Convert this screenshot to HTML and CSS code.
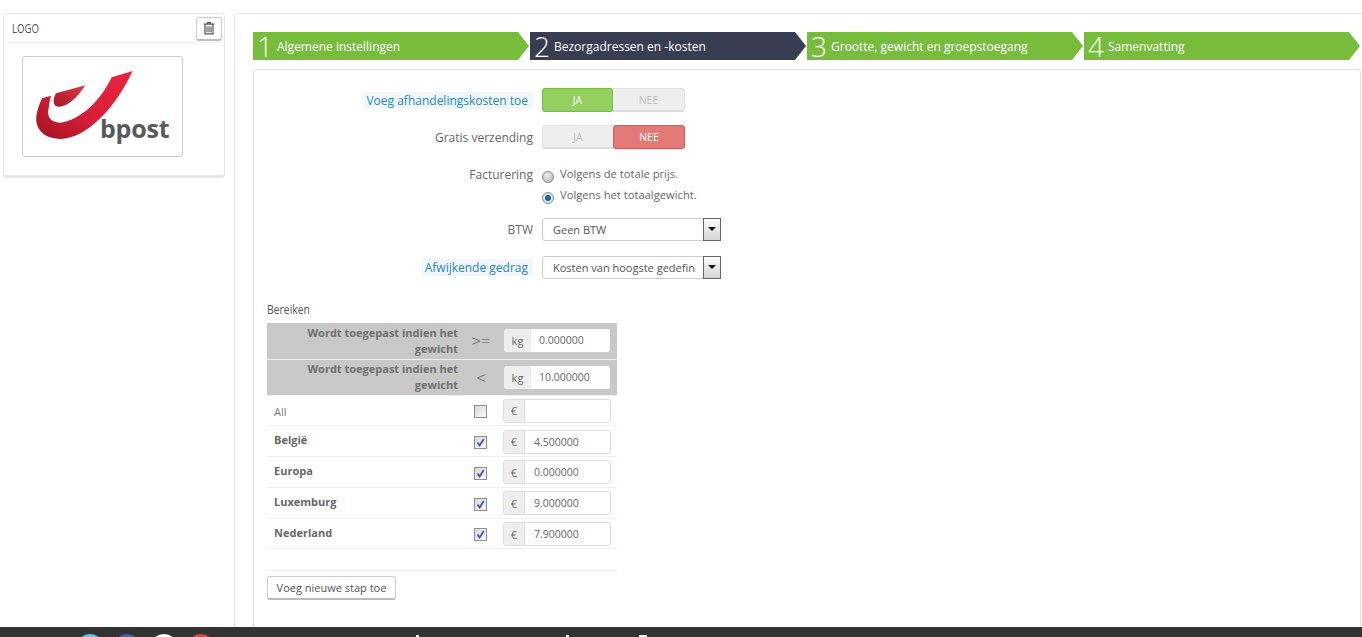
FILE: index.html
```html
<!DOCTYPE html>
<html lang="nl">
<head>
<meta charset="utf-8">
<title>Bezorgadressen en -kosten</title>
<link rel="stylesheet" href="styles.css">
</head>
<body>
<div class="page">
  <div class="columns">
    <aside class="side-panel">
      <div class="side-head">
        <span class="side-title">LOGO</span>
        <button class="trash" type="button" aria-label="Verwijderen">
          <svg width="12" height="13" viewBox="0 0 12 13"><path d="M4.5 1.5V.7h3v.8M.8 2.2h10.4M2 2.6v9.2h8V2.6" fill="none" stroke="#555" stroke-width="1.2"/><path d="M4 4.2v6M6 4.2v6M8 4.2v6" stroke="#555" stroke-width="1.1"/></svg>
        </button>
      </div>
      <div class="logo-box">
        <svg class="logo-art" width="161" height="101" viewBox="6 3 483 303">
          <defs>
            <linearGradient id="red" x1="0" y1="1" x2="1" y2="0">
              <stop offset="0" stop-color="#a01422"/>
              <stop offset=".45" stop-color="#d81f38"/>
              <stop offset="1" stop-color="#e8263f"/>
            </linearGradient>
            <linearGradient id="red2" x1="0" y1="1" x2="1" y2="0">
              <stop offset="0" stop-color="#a81625"/>
              <stop offset="1" stop-color="#dc3a4c"/>
            </linearGradient>
          </defs>
          <path d="M338 48L275 67C250 120 200 185 130 202C100 208 78 190 86 160C88 145 90 132 93 122L66 130C52 160 46 185 50 205C58 240 95 258 140 250C215 235 290 150 338 48Z" fill="url(#red)"/>
          <path d="M196 91L108 115C100 128 98 145 106 152C125 165 165 140 196 91Z" fill="url(#red2)"/>
        </svg>
        <span class="logo-word">bpost</span>
      </div>
    </aside>

    <main class="main-panel">
      <ol class="steps">
        <li class="step"><span class="step-num">1</span><span class="step-name">Algemene instellingen</span></li>
        <li class="step step-current"><span class="step-num">2</span><span class="step-name">Bezorgadressen en -kosten</span></li>
        <li class="step"><span class="step-num">3</span><span class="step-name">Grootte, gewicht en groepstoegang</span></li>
        <li class="step"><span class="step-num">4</span><span class="step-name">Samenvatting</span></li>
      </ol>

      <section class="form-panel">
        <div class="row row-switch">
          <div class="label"><span class="hint">Voeg afhandelingskosten toe</span></div>
          <div class="switch">
            <span class="opt opt-yes">JA</span>
            <span class="opt">NEE</span>
          </div>
        </div>
        <div class="row row-switch2">
          <div class="label">Gratis verzending</div>
          <div class="switch">
            <span class="opt">JA</span>
            <span class="opt opt-no">NEE</span>
          </div>
        </div>
        <div class="row row-radio">
          <div class="label">Facturering</div>
          <div class="radios">
            <div class="radio-line"><span class="radio"></span><span>Volgens de totale prijs.</span></div>
            <div class="radio-line"><span class="radio radio-on"></span><span>Volgens het totaalgewicht.</span></div>
          </div>
        </div>
        <div class="row row-select">
          <div class="label">BTW</div>
          <div class="select"><span class="select-text">Geen BTW</span><span class="select-btn"></span></div>
        </div>
        <div class="row row-select2">
          <div class="label"><span class="hint">Afwijkende gedrag</span></div>
          <div class="select"><span class="select-text">Kosten van hoogste gedefinieerde bereik</span><span class="select-btn"></span></div>
        </div>

        <h3 class="ranges-title"><span class="narrow-title">Bereiken</span></h3>
        <table class="ranges">
          <tr class="range-head">
            <th class="c-label">Wordt toegepast indien het gewicht</th>
            <td class="c-sign">&gt;=</td>
            <td class="c-input"><div class="group group-head"><span class="addon addon-kg">kg</span><span class="field">0.000000</span></div></td>
          </tr>
          <tr class="range-head">
            <th class="c-label">Wordt toegepast indien het gewicht</th>
            <td class="c-sign">&lt;</td>
            <td class="c-input"><div class="group group-head"><span class="addon addon-kg">kg</span><span class="field">10.000000</span></div></td>
          </tr>
          <tr class="zone">
            <td class="c-zone c-zone-all">All</td>
            <td class="c-check"><span class="check"></span></td>
            <td class="c-input"><div class="group"><span class="addon">€</span><span class="field"></span></div></td>
          </tr>
          <tr class="zone">
            <td class="c-zone">België</td>
            <td class="c-check"><span class="check check-on"><svg width="9" height="9" viewBox="0 0 9 9"><path d="M1.5 4.5L3.6 7.5 7.8 1" fill="none" stroke="#3b57b5" stroke-width="1.8"/></svg></span></td>
            <td class="c-input"><div class="group"><span class="addon">€</span><span class="field">4.500000</span></div></td>
          </tr>
          <tr class="zone">
            <td class="c-zone">Europa</td>
            <td class="c-check"><span class="check check-on"><svg width="9" height="9" viewBox="0 0 9 9"><path d="M1.5 4.5L3.6 7.5 7.8 1" fill="none" stroke="#3b57b5" stroke-width="1.8"/></svg></span></td>
            <td class="c-input"><div class="group"><span class="addon">€</span><span class="field">0.000000</span></div></td>
          </tr>
          <tr class="zone">
            <td class="c-zone">Luxemburg</td>
            <td class="c-check"><span class="check check-on"><svg width="9" height="9" viewBox="0 0 9 9"><path d="M1.5 4.5L3.6 7.5 7.8 1" fill="none" stroke="#3b57b5" stroke-width="1.8"/></svg></span></td>
            <td class="c-input"><div class="group"><span class="addon">€</span><span class="field">9.000000</span></div></td>
          </tr>
          <tr class="zone">
            <td class="c-zone">Nederland</td>
            <td class="c-check"><span class="check check-on"><svg width="9" height="9" viewBox="0 0 9 9"><path d="M1.5 4.5L3.6 7.5 7.8 1" fill="none" stroke="#3b57b5" stroke-width="1.8"/></svg></span></td>
            <td class="c-input"><div class="group"><span class="addon">€</span><span class="field">7.900000</span></div></td>
          </tr>
        </table>
        <div class="add-row"><button class="add-btn" type="button">Voeg nieuwe stap toe</button></div>
      </section>
    </main>
  </div>
  <footer class="footer">
    <div class="socials">
      <span class="dot dot-tw"></span>
      <span class="dot dot-fb"></span>
      <span class="dot dot-gh"></span>
      <span class="dot dot-gp"></span>
      <span class="mark mark-a"></span>
      <span class="mark mark-b"></span>
      <span class="mark mark-c"></span>
    </div>
  </footer>
</div>
</body>
</html>
```

FILE: styles.css
```css
* { box-sizing: border-box; }
html, body { margin: 0; padding: 0; height: 100%; overflow: hidden; background: #fff; }
body { font-family: "Open Sans", "Liberation Sans", sans-serif; font-size: 11px; color: #666; }

.page { height: 637px; display: flex; flex-direction: column; }
.columns { flex: 1; min-height: 0; display: flex; align-items: flex-start; padding: 13px 0 0 3px; gap: 9px; }

.side-panel { width: 222px; height: 165px; flex: none; border: 1px solid #e6e6e6; border-bottom: 3px solid #e6e6e6; border-radius: 4px; padding: 0 4px; }
.side-head { height: 29px; display: flex; justify-content: space-between; align-items: flex-start; border-bottom: 1px solid #eee; }
.side-title { display: inline-block; font-size: 12px; color: #555; margin: 6px 0 0 4px; transform: scaleX(.8); transform-origin: left center; }
.trash { width: 26px; height: 24px; margin: 3px -2px 0 0; padding: 0; display: flex; align-items: center; justify-content: center; background: #fff; border: 1px solid #ccc; border-bottom: 2px solid #bbb; border-radius: 3px; }
.logo-box { position: relative; width: 161px; height: 101px; margin: 13px 0 0 14px; border: 1px solid #ccc; border-radius: 3px; background: #fff; overflow: hidden; }
.logo-art { position: absolute; left: -1px; top: -1px; }
.logo-word { position: absolute; left: 77px; top: 55px; font-size: 25px; line-height: 32px; font-weight: 700; color: #58595b; letter-spacing: -.2px; }

.main-panel { flex: 1; height: 624px; border: 1px solid #e6e6e6; border-right: 0; border-bottom: 0; border-radius: 4px 0 0 0; padding: 18px 0 0 18px; min-width: 0; }

.steps { list-style: none; margin: 0; padding: 0; display: flex; gap: 1px; height: 28px; }
.step { width: 276px; height: 28px; flex: none; display: flex; align-items: center; background: #78bc3c; color: #fff; clip-path: polygon(0 0, 265px 0, 276px 14px, 265px 28px, 0 28px); font-size: 12px; }
.step-current { background: #383d52; }
.step-num { font-size: 28px; font-weight: 300; line-height: 28px; width: 24px; padding-left: 4px; flex: none; }

.form-panel { width: 1108px; height: 570px; margin-top: 9px; border: 1px solid #e0e0e0; border-bottom: 0; border-radius: 4px 4px 0 0; position: relative; }

.row { display: flex; gap: 9px; font-size: 12px; }
.label { width: 279px; flex: none; text-align: right; color: #666; font-size: 12px; }
.hint { display: inline-block; background: #eff7fb; color: #2a86b4; padding: 0 5px 0 3px; border-radius: 2px; height: 17px; line-height: 17px; margin-right: 0; }
.row-switch { margin-top: 18px; height: 24px; align-items: center; }
.row-switch2 { margin-top: 13px; height: 24px; align-items: center; }
.row-radio { margin-top: 17px; }
.row-select { margin-top: 14px; height: 24px; align-items: center; }
.row-select2 { margin-top: 14px; height: 24px; align-items: center; }

.switch { width: 143px; height: 24px; display: flex; border-radius: 3px; background: #eee; border: 1px solid #e2e2e2; border-bottom: 2px solid #dcdcdc; font-size: 10.5px; }
.opt { flex: 1; display: flex; align-items: center; justify-content: center; color: #bbb; margin: -1px 0 -2px; padding-bottom: 1px; }
.opt-yes { flex: 0 0 71px; margin-left: -1px; background: #93d060; color: #fff; border: 1px solid #78bc3c; border-radius: 3px; }
.opt-no { flex: 0 0 72px; margin-right: -1px; background: #e37a78; color: #fff; border: 1px solid #d25a58; border-radius: 3px; }

.radios { display: flex; flex-direction: column; gap: 5px; font-size: 11.2px; color: #666; }
.radio-line { display: flex; gap: 6px; height: 16px; line-height: 15px; }
.radio { width: 12px; height: 12px; margin-top: 5px; border-radius: 50%; border: 1px solid #8a8a8a; background: radial-gradient(circle at 40% 30%, #ececec, #b4b4b4); }
.radio-on { background: radial-gradient(circle, #1f8fd6 0, #0a5a94 30%, #0a5a94 36%, #e8e8e8 48%, #cfcfcf 100%); }

.select { width: 179px; height: 23px; display: flex; align-items: stretch; background: #fff; border: 1px solid #ccc; border-radius: 3px; font-size: 11px; color: #555; }
.select-text { flex: 1; min-width: 0; padding: 0 0 0 10px; line-height: 22px; white-space: nowrap; overflow: hidden; }
.select-btn { width: 18px; flex: none; margin: -1px -1px -1px 7px; position: relative; background: linear-gradient(#fbfbfb, #d6d6d6); border: 1px solid #666; }
.select-btn::after { content: ""; position: absolute; left: 4px; top: 8px; border: 4px solid transparent; border-top: 4px solid #111; border-bottom: 0; }

.ranges-title { margin: 22px 0 0 13px; font-size: 13px; line-height: 16px; font-weight: 400; color: #555; }
.narrow-title { display: inline-block; transform: scaleX(.8); transform-origin: left center; }

.ranges { width: 350px; margin: 6px 0 0 13px; border-collapse: collapse; table-layout: fixed; font-size: 11px; }
.range-head { height: 36px; background: #c8c8c8; border-bottom: 1px solid #eee; }
.c-label { width: 198px; padding: 0 7px 0 30px; text-align: right; font-weight: 700; color: #707070; font-size: 11px; line-height: 16px; }
.c-sign { width: 32px; padding: 0; text-align: center; font-size: 17px; font-weight: 300; color: #555; }
.c-input { width: 120px; padding: 0 6px; }
.zone { height: 30.8px; border-bottom: 1px solid #eee; }
.zone .c-input { padding-top: 1px; }
.c-zone { padding: 0 0 3px 7px; font-weight: 700; color: #666; }
.c-zone-all { font-weight: 400; color: #777; padding-top: 3px; padding-bottom: 0; }
.c-check { padding: 0 2px 0 0; text-align: center; }
.check { display: inline-flex; align-items: center; justify-content: center; vertical-align: middle; width: 13px; height: 13px; border: 1px solid #8e8e8e; background: linear-gradient(135deg, #d6d6d6, #fbfbfb); }

.group { height: 24px; display: flex; border: 1px solid #ddd; border-radius: 3px; overflow: hidden; background: #fff; }
.addon { width: 21px; flex: none; display: flex; align-items: center; justify-content: center; background: #eee; border-right: 1px solid #ddd; color: #666; font-size: 11px; }
.field { flex: 1; padding: 0 0 0 9px; line-height: 23px; color: #666; font-size: 10.5px; }
.group-head { height: 23px; border: 0; margin: 0 0 0 1px; width: 106px; }
.addon-kg { width: 27px; border-right: 0; }
.group-head .field { padding-left: 8px; line-height: 23px; }

.add-row { width: 350px; margin: 21px 0 0 13px; border-top: 1px solid #eee; padding-top: 5px; }
.add-btn { height: 24px; width: 129px; padding: 0; background: #fff; border: 1px solid #ccc; border-bottom: 2px solid #bbb; border-radius: 3px; font-family: inherit; font-size: 11px; color: #555; }

.footer { height: 10px; flex: none; background: #333; overflow: hidden; position: relative; z-index: 2; }
.socials { display: flex; gap: 9px; padding: 7px 0 0 76px; }
.dot { width: 28px; height: 28px; flex: none; border-radius: 50%; }
.dot-tw { background: #5fc6ee; }
.dot-fb { background: #3c63ad; }
.dot-gh { background: #fff; }
.dot-gp { background: #dd4b39; }
.mark { flex: none; height: 4px; background: #eee; margin-top: 1px; }
.mark-a { width: 3px; margin-left: 192px; }
.mark-b { width: 3px; margin-left: 138px; }
.mark-c { width: 8px; margin-left: 61px; }
```
